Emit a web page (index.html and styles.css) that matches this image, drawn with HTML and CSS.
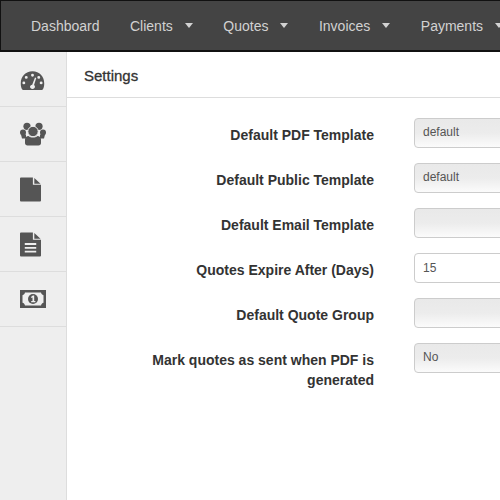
FILE: index.html
```html
<!DOCTYPE html>
<html lang="en">
<head>
  <meta charset="UTF-8" />
  <title>Settings</title>
  <link rel="stylesheet" href="styles.css">
</head>
<body>
  <nav class="navbar">
    <a class="nav-link">Dashboard</a>
    <a class="nav-link has-caret">Clients</a>
    <a class="nav-link has-caret">Quotes</a>
    <a class="nav-link has-caret">Invoices</a>
    <a class="nav-link has-caret">Payments</a>
  </nav>

  <div class="layout">
    <aside class="sidebar">
      <div class="side-item">
        <svg class="icon-gauge" width="25" height="21" viewBox="0 0 26 20"><path fill-rule="evenodd" d="M13 .5C5.800.5.800 6 .800 13c0 2.400.5 4.500 1.400 6.200.2.400.6.600 1 .6h19.600c.4 0 .8-.2 1-.6.900-1.700 1.400-3.800 1.400-6.200C25.200 6 20.200.5 13 .5zM13 3a1.500 1.500 0 1 1 0 3 1.500 1.500 0 0 1 0-3zM6.500 5.300a1.500 1.500 0 1 1 0 3 1.500 1.500 0 0 1 0-3zM19.500 5.300a1.500 1.500 0 1 1 0 3 1.500 1.500 0 0 1 0-3zM4 11a1.500 1.500 0 1 1 0 3 1.500 1.500 0 0 1 0-3zM22 11a1.500 1.500 0 1 1 0 3 1.500 1.500 0 0 1 0-3zM15.600 6.800l1.300.5-2.300 7.300c.6.500 1 1.200 1 2 0 1.300-1.200 2.300-2.600 2.300s-2.600-1-2.600-2.300c0-1.200 1-2.200 2.300-2.300z" fill="#555"/></svg>
      </div>
      <div class="side-item">
        <svg class="icon-people" width="26" height="25" viewBox="0 0 26 24" fill="#555"><circle cx="7" cy="3.800" r="3.600"/><circle cx="19" cy="3.800" r="3.600"/><circle cx="3" cy="10" r="3"/><circle cx="23" cy="10" r="3"/><path d="M1 12h5v4H2z"/><path d="M25 12h-5v4h4z"/><circle cx="13" cy="9" r="5.200" stroke="#eee" stroke-width="1"/><path d="M5 17c0-2 1.500-3.600 3.500-3.600 1.200 1 2.800 1.500 4.500 1.500s3.300-.5 4.500-1.500c2 0 3.500 1.600 3.500 3.600v3.500c0 1.500-1 2.500-2.500 2.500h-11C6 23 5 22 5 20.500z"/></svg>
      </div>
      <div class="side-item">
        <svg class="icon-doc" width="21" height="25" viewBox="0 0 22 25" fill="#555"><path d="M1 0h12.500v7.500H22V24a1 1 0 0 1-1 1H1a1 1 0 0 1-1-1V1a1 1 0 0 1 1-1z"/><path d="M15 .5l6.500 6h-6.500z"/></svg>
      </div>
      <div class="side-item">
        <svg class="icon-doc" width="21" height="25" viewBox="0 0 22 25"><path fill="#555" d="M1 0h12.500v7.500H22V24a1 1 0 0 1-1 1H1a1 1 0 0 1-1-1V1a1 1 0 0 1 1-1z"/><path fill="#555" d="M15 .5l6.500 6h-6.500z"/><path fill="#eee" d="M5 11h12v2H5zM5 15h12v2H5zM5 19h12v2H5z"/></svg>
      </div>
      <div class="side-item">
        <svg width="26" height="18" viewBox="0 0 26 18"><path fill="#555" d="M0 0h26v18H0z"/><path fill="#eee" d="M5 2.500h16c.3 1.500 1.200 2.400 2.500 2.700v7.600c-1.300.3-2.200 1.200-2.500 2.700H5c-.3-1.500-1.200-2.400-2.500-2.700V5.200C3.800 4.900 4.700 4 5 2.500z"/><circle cx="13" cy="9" r="5" fill="#555"/><path fill="#eee" d="M12.800 5.500h1.400v5.500h1.200v1.300h-4.200V11h1.300V7.500l-1.300.5V6.800z"/></svg>
      </div>
    </aside>

    <main class="content">
      <div class="header-bar">Settings</div>
      <form class="settings-form">
        <div class="form-row">
          <label class="form-label">Default PDF Template</label>
          <div class="select-box">default</div>
        </div>
        <div class="form-row">
          <label class="form-label">Default Public Template</label>
          <div class="select-box">default</div>
        </div>
        <div class="form-row">
          <label class="form-label">Default Email Template</label>
          <div class="select-box"></div>
        </div>
        <div class="form-row">
          <label class="form-label">Quotes Expire After (Days)</label>
          <div class="text-box">15</div>
        </div>
        <div class="form-row">
          <label class="form-label">Default Quote Group</label>
          <div class="select-box"></div>
        </div>
        <div class="form-row">
          <label class="form-label">Mark quotes as sent when PDF is generated</label>
          <div class="select-box">No</div>
        </div>
      </form>
    </main>
  </div>
</body>
</html>
```

FILE: styles.css
```css
html, body {
  margin: 0;
  padding: 0;
  height: 500px;
  overflow: hidden;
}
body {
  font-family: "Liberation Sans", Arial, sans-serif;
  background: #fff;
  color: #333;
}
.navbar {
  display: flex;
  align-items: center;
  box-sizing: border-box;
  height: 52px;
  padding-left: 30px;
  gap: 30.500px;
  background: #444;
  border: 1px solid #111;
  border-width: 1px 0 2px 1px;
  white-space: nowrap;
  overflow: hidden;
}
.nav-link {
  display: flex;
  align-items: center;
  font-size: 14px;
  color: #d2d2d2;
}
.has-caret::after {
  content: "";
  margin-left: 12px;
  border-left: 4.500px solid transparent;
  border-right: 4.500px solid transparent;
  border-top: 5px solid #d2d2d2;
}
.layout {
  display: flex;
  height: 448px;
}
.sidebar {
  box-sizing: border-box;
  width: 67px;
  flex: none;
  background: #eee;
  border-right: 1px solid #ddd;
}
.side-item {
  display: flex;
  align-items: center;
  justify-content: center;
  box-sizing: border-box;
  height: 55px;
  border-bottom: 1px solid #ddd;
}
.icon-gauge {
  margin-right: 2px;
  margin-top: 2px;
}
.icon-people {
  margin-top: 1px;
}
.icon-doc {
  margin-right: 5px;
}
.content {
  flex: 1;
  min-width: 0;
  overflow: hidden;
}
.header-bar {
  box-sizing: border-box;
  height: 46px;
  padding: 15px 0 0 17px;
  font-size: 15px;
  color: #333;
  border-bottom: 1px solid #ddd;
  -webkit-text-stroke: 0.300px #333;
}
.settings-form {
  display: flex;
  flex-direction: column;
  gap: 15px;
  padding-top: 20px;
}
.form-row {
  display: flex;
  gap: 40px;
  height: 30px;
}
.form-label {
  box-sizing: border-box;
  width: 307px;
  flex: none;
  padding: 7px 0 0 60px;
  text-align: right;
  font-size: 14px;
  line-height: 20px;
  font-weight: bold;
  color: #333;
}
.select-box, .text-box {
  box-sizing: border-box;
  width: 200px;
  flex: none;
  height: 30px;
  border: 1px solid #ccc;
  border-radius: 4px;
  font-size: 12px;
  line-height: 26px;
  padding-left: 8px;
  color: #555;
}
.select-box {
  background: linear-gradient(#e9e9e9, #ececec 50%, #fbfbfb);
}
.text-box {
  background: #fff;
  line-height: 28px;
}
```
